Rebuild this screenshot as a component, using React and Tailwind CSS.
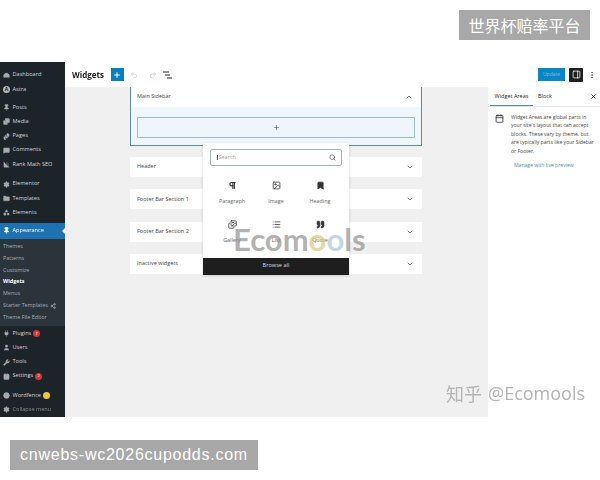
import {
  Plus, Undo2, Redo2, ChevronUp, ChevronDown, Search, X, MoreVertical, PanelRight, Pilcrow, Image, Bookmark, Images, List,
  Gauge, Pin, FileStack, MessageSquare, BarChart3, Folder, Shapes, Plug, User, Wrench, Settings, CirclePlay, Share2, Quote, Calendar,
} from 'lucide-react';

const MenuRow = ({ icon: Icon, label, className = '', badge, badgeColor = 'bg-[#d63638]', dim }) => (
  <div className={`flex h-[14.3px] items-center pl-[1px] ${className}`}>
    <span className="flex w-[11px] justify-center text-[#a7aaad]">
      {Icon && <Icon size={7} fill="currentColor" strokeWidth={1.5} />}
    </span>
    <span className={`ml-[0.5px] text-[5.6px] leading-none whitespace-nowrap ${dim ? 'text-[#8c8f94]' : 'text-[#d5d8da]'}`}>{label}</span>
    {badge && (
      <span className={`ml-[2px] flex h-[7px] w-[7px] items-center justify-center rounded-full text-[4px] text-white ${badgeColor}`}>{badge}</span>
    )}
  </div>
);

const SubRow = ({ label, active, children }) => (
  <div className={`flex h-[11.8px] items-center gap-[2px] pl-[3px] text-[5.4px] leading-none whitespace-nowrap ${active ? 'font-bold text-white' : 'text-[#a9afb5]'}`}>
    {label}
    {children}
  </div>
);

const AstraIcon = () => (
  <span className="flex w-[11px] justify-center">
    <span className="flex h-[7px] w-[7px] items-center justify-center rounded-full bg-[#b4b7ba] text-[5px] font-bold leading-none text-[#1d2327]">A</span>
  </span>
);

const Sidebar = () => (
  <aside className="flex w-[65px] shrink-0 flex-col bg-[#1c2329] pt-[6px]">
    <MenuRow icon={Gauge} label="Dashboard" />
    <div className="flex h-[14.3px] items-center pl-[1px]">
      <AstraIcon />
      <span className="ml-[0.5px] text-[5.6px] leading-none text-[#d5d8da]">Astra</span>
    </div>
    <MenuRow icon={Pin} label="Posts" className="mt-[4px]" />
    <MenuRow icon={Images} label="Media" />
    <MenuRow icon={FileStack} label="Pages" />
    <MenuRow icon={MessageSquare} label="Comments" />
    <MenuRow icon={BarChart3} label="Rank Math SEO" />
    <MenuRow icon={Settings} label="Elementor" className="mt-[5.5px]" />
    <MenuRow icon={Folder} label="Templates" />
    <MenuRow icon={Shapes} label="Elements" />
    <div className="relative mt-[3px] flex h-[16px] items-center bg-[#1f72b1] pl-[1px]">
      <span className="flex w-[11px] justify-center text-white"><Pin size={7} fill="currentColor" /></span>
      <span className="ml-[0.5px] text-[5.6px] leading-none text-white">Appearance</span>
      <span className="absolute right-0 top-[5px] border-y-[3px] border-r-[3px] border-y-transparent border-r-white" />
    </div>
    <div className="flex h-[88px] flex-col bg-[#2c343b] pt-[2px]">
      <SubRow label="Themes" />
      <SubRow label="Patterns" />
      <SubRow label="Customize" />
      <SubRow label="Widgets" active />
      <SubRow label="Menus" />
      <SubRow label="Starter Templates"><Share2 size={6} className="text-[#c3c6c9]" /></SubRow>
      <SubRow label="Theme File Editor" />
    </div>
    <MenuRow icon={Plug} label="Plugins" badge="7" />
    <MenuRow icon={User} label="Users" />
    <MenuRow icon={Wrench} label="Tools" />
    <MenuRow icon={Calendar} label="Settings" badge="2" />
    <div className="mt-[5px]">
      <MenuRow icon={CirclePlay} label="Wordfence" badge=" " badgeColor="bg-[#f2c63d]" />
    </div>
    <MenuRow icon={Settings} label="Collapse menu" dim />
  </aside>
);

const WidgetRow = ({ label }) => (
  <div className="flex h-[20px] items-center justify-between bg-white pl-[7px] pr-[8px]">
    <span className="text-[5.5px] leading-none text-[#444]">{label}</span>
    <ChevronDown size={8} className="text-[#333]" />
  </div>
);

const BlockItem = ({ icon, label }) => (
  <div className="flex h-[39px] flex-col items-center">
    <span className="flex h-[12px] items-center justify-center text-[#333]">{icon}</span>
    <span className="mt-[7px] text-[5.4px] leading-none text-[#666]">{label}</span>
  </div>
);

const Inserter = () => (
  <div className="absolute left-[138px] top-[56px] flex h-[132px] w-[146px] flex-col bg-white shadow-[0_1px_3px_rgba(0,0,0,0.15)]">
    <div className="mx-[7px] mt-[6px] flex h-[17px] items-center justify-between rounded-[2px] border border-[#9fb5b8] pl-[6px] pr-[5px]">
      <span className="border-l border-[#555] pl-[0.5px] text-[5.5px] leading-none text-[#999]">Search</span>
      <Search size={7} className="text-[#333]" />
    </div>
    <div className="mx-[7px] mt-[14px] grid grid-cols-3">
      <BlockItem icon={<Pilcrow size={9} strokeWidth={3} />} label="Paragraph" />
      <BlockItem icon={<Image size={9} />} label="Image" />
      <BlockItem icon={<Bookmark size={9} fill="currentColor" />} label="Heading" />
      <BlockItem icon={<Images size={9} />} label="Gallery" />
      <BlockItem icon={<List size={9} />} label="List" />
      <BlockItem icon={<Quote size={9} fill="currentColor" />} label="Quote" />
    </div>
    <div className="mt-auto flex h-[18px] items-center justify-center bg-[#1e1e1e] text-[5.6px] leading-none text-[#ddd]">Browse all</div>
  </div>
);

const Canvas = () => (
  <div className="relative flex-1 bg-[#f0f0f0] pl-[65px] pr-[66px]">
    <div className="border-x border-b border-[#5a8f96]">
      <div className="flex h-[20px] items-center justify-between bg-white pl-[6px] pr-[8px]">
        <span className="text-[5.5px] leading-none text-[#444]">Main Sidebar</span>
        <ChevronUp size={8} className="text-[#333]" />
      </div>
      <div className="bg-[#f0f7fc] px-[6px] pb-[7px] pt-[10px]">
        <div className="flex h-[21px] items-center justify-center rounded-[1px] border border-[#9dbcc6] bg-[#eef6fc]">
          <Plus size={7} className="text-[#555]" />
        </div>
      </div>
    </div>
    <div className="mt-[11px] flex flex-col gap-[12.3px]">
      <WidgetRow label="Header" />
      <WidgetRow label="Footer Bar Section 1" />
      <WidgetRow label="Footer Bar Section 2" />
      <WidgetRow label="Inactive widgets" />
    </div>
    <Inserter />
  </div>
);

const SidePanel = () => (
  <div className="w-[112px] shrink-0 bg-white">
    <div className="flex h-[20px] items-center border-b border-[#e4e4e4] pr-[3px]">
      <div className="relative flex h-full w-[47px] items-center justify-center text-[5.5px] leading-none text-[#222]">
        Widget Areas
        <span className="absolute bottom-0 left-[2px] right-[2px] h-[1px] bg-[#4f8f93]" />
      </div>
      <span className="ml-[3px] text-[5.5px] leading-none text-[#222]">Block</span>
      <X size={7} strokeWidth={3} className="ml-auto text-[#222]" />
    </div>
    <div className="flex pl-[7px] pt-[6px]">
      <Calendar size={9} className="mt-[1px] text-[#222]" />
      <p className="ml-[7px] text-[5.1px] leading-[8.4px] text-[#444] whitespace-nowrap">
        Widget Areas are global parts in<br />
        your site's layout that can accept<br />
        blocks. These vary by theme, but<br />
        are typically parts like your Sidebar<br />
        or Footer.
      </p>
    </div>
    <div className="mt-[8px] pl-[26px] text-[5.1px] leading-none text-[#4f8f93]">Manage with live preview</div>
  </div>
);

const ListViewIcon = () => (
  <svg width="9" height="8" viewBox="0 0 9 8" fill="none" stroke="currentColor" strokeWidth="1" className="ml-[6px] text-[#222]">
    <path d="M0 1h6M2 4h5M4 7h5" />
  </svg>
);

const TopBar = () => (
  <header className="flex h-[25px] items-center bg-white">
    <span className="ml-[7px] text-[8px] font-bold leading-none text-[#222]">Widgets</span>
    <button className="ml-[7px] flex h-[13px] w-[13px] items-center justify-center bg-[#0a7fc0] text-white"><Plus size={8} strokeWidth={3} /></button>
    <Undo2 size={8} className="ml-[6px] text-[#c4c4c4]" />
    <Redo2 size={8} className="ml-[11px] text-[#c4c4c4]" />
    <ListViewIcon />
    <button className="ml-auto flex h-[13px] w-[27px] items-center justify-center bg-[#0a86c4] text-[5px] leading-none text-[#7cc0e4]">Update</button>
    <button className="ml-[4px] flex h-[14px] w-[14px] items-center justify-center rounded-[1px] bg-[#1e1e1e] text-white"><PanelRight size={9} /></button>
    <MoreVertical size={8} className="ml-[5px] mr-[4px] text-[#444]" />
  </header>
);

const App = () => (
  <div className="relative h-[480px] w-[600px] overflow-hidden bg-white font-['Open_Sans',sans-serif]">
    <div className="relative h-[417px] pt-[62px] blur-[0.35px]">
      <div className="flex h-[355px]">
        <Sidebar />
        <div className="flex min-w-0 flex-1 flex-col">
          <TopBar />
          <div className="flex flex-1">
            <Canvas />
            <SidePanel />
          </div>
        </div>
      </div>

      {/* watermarks */}
      <div className="absolute left-[233px] top-[221px] font-['Lato',sans-serif] text-[31px] font-bold leading-[36px] text-[#8f8f8f]/70">
        Ecom<span className="text-[#d9c77e]/70">o</span><span className="text-[#a9c4d8]/70">o</span>ls
      </div>
    </div>
    <div className="absolute left-[446px] top-[381px] flex h-[24px] items-center text-[18px] leading-none text-[#b4b4b4] blur-[0.3px]">
      <span className="font-['Noto_Sans_CJK_SC',sans-serif]">知乎</span>
      <span className="ml-[6px] font-['Open_Sans',sans-serif]">@Ecomools</span>
    </div>
    <div className="absolute right-[10px] top-[10px] flex h-[30px] w-[131px] items-center justify-center bg-[#a8a8a8] font-['Noto_Sans_CJK_SC',sans-serif] text-[16px] leading-none text-white">
      世界杯赔率平台
    </div>
    <div className="absolute bottom-[10px] left-[10px] flex h-[30px] w-[248px] items-center justify-center bg-[#a8a8a8] font-['Liberation_Sans',sans-serif] text-[16px] leading-none tracking-[0.75px] text-white">
      cnwebs-wc2026cupodds.com
    </div>
  </div>
);

export default App;
